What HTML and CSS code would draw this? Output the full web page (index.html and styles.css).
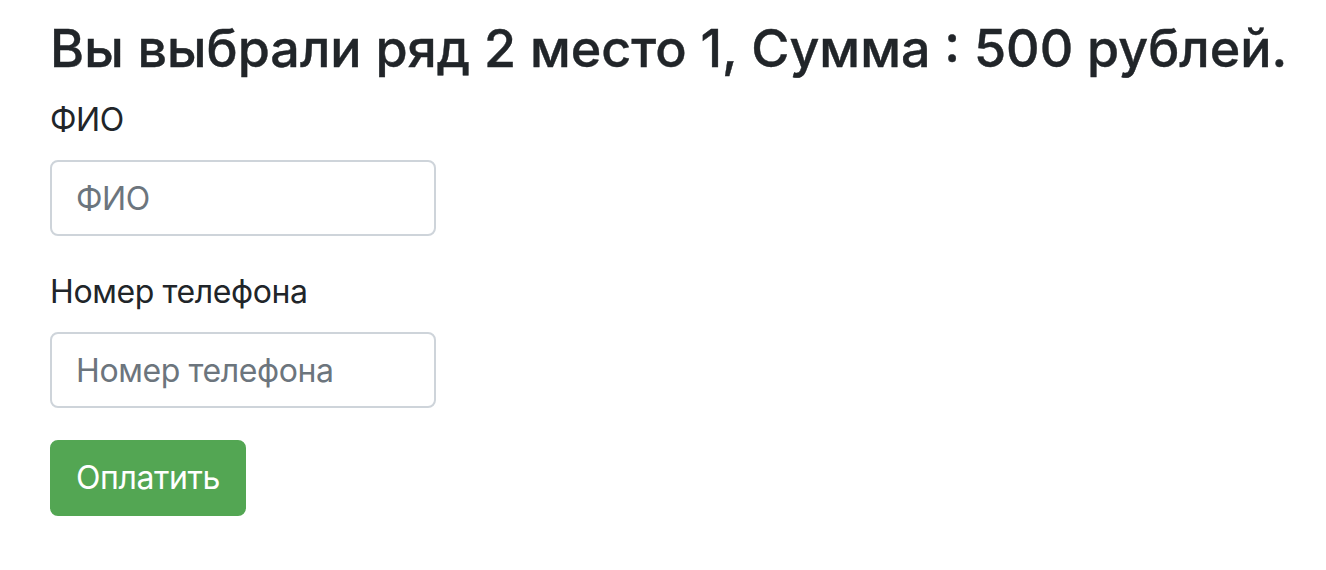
FILE: index.html
```html
<!DOCTYPE html>
<html lang="ru">
<head>
<meta charset="utf-8">
<title>Оплата</title>
<link rel="stylesheet" href="styles.css">
</head>
<body>
<main class="page">
  <h4 class="title">Вы выбрали ряд 2 место 1, Сумма : 500 рублей.</h4>
  <form class="form">
    <div class="group">
      <label class="label" for="fio">ФИО</label>
      <input class="input" id="fio" type="text" placeholder="ФИО">
    </div>
    <div class="group">
      <label class="label" for="phone">Номер телефона</label>
      <input class="input" id="phone" type="text" placeholder="Номер телефона">
    </div>
    <div class="actions">
      <button class="btn" type="button">Оплатить</button>
    </div>
  </form>
</main>
</body>
</html>
```
FILE: styles.css
```css
html, body {
  margin: 0;
  padding: 0;
  background: #fff;
}
body {
  font-family: Inter, "Noto Sans", "Liberation Sans", sans-serif;
  color: #212529;
}
.page {
  padding: 18px 50px;
  display: flex;
  flex-direction: column;
  align-items: flex-start;
}
.title {
  margin: 0 0 16px;
  font-size: 52px;
  font-weight: 500;
  line-height: 62px;
  letter-spacing: 0;
  white-space: nowrap;
  color: #212529;
  -webkit-text-stroke: 0.4px #212529;
}
.form {
  display: flex;
  flex-direction: column;
  gap: 32px;
}
.group {
  display: flex;
  flex-direction: column;
  align-items: flex-start;
  gap: 16px;
}
.label {
  font-size: 32px;
  line-height: 48px;
  font-weight: 400;
  letter-spacing: -0.4px;
  color: #212529;
}
.input {
  box-sizing: border-box;
  width: 386px;
  height: 76px;
  padding: 12px 24px;
  font-family: inherit;
  font-size: 32px;
  line-height: 48px;
  letter-spacing: -0.4px;
  color: #495057;
  background: #fff;
  border: 2px solid #ced4da;
  border-radius: 8px;
  outline: none;
}
.input::placeholder {
  color: #6c757d;
  opacity: 1;
}
.btn {
  box-sizing: border-box;
  height: 76px;
  padding: 12px 24px;
  font-family: inherit;
  font-size: 32px;
  line-height: 48px;
  font-weight: 400;
  letter-spacing: -0.4px;
  color: #fff;
  background: #53a653;
  border: 2px solid #53a653;
  border-radius: 8px;
  cursor: pointer;
}
```
